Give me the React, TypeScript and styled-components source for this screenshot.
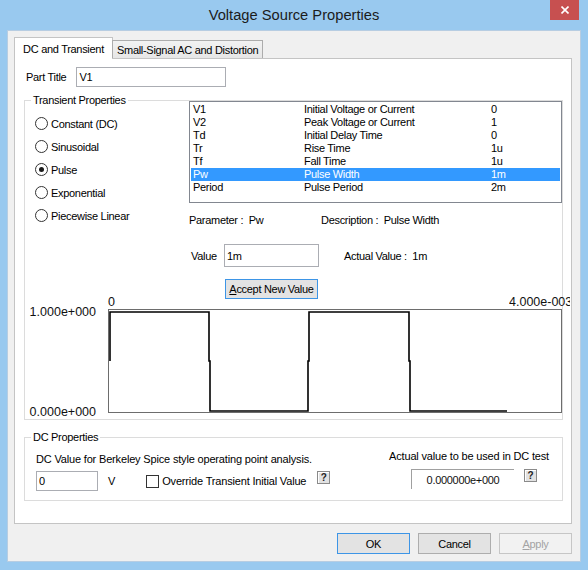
import React from 'react';
import styled, { createGlobalStyle } from 'styled-components';

const GlobalStyle = createGlobalStyle`
  html, body { margin: 0; padding: 0; background: #fff; }
  body { font-family: "Liberation Sans", Arial, sans-serif; }
  * { box-sizing: border-box; }
`;

const uiFont = `
  font-family: "Liberation Sans", Arial, sans-serif;
  font-size: 11px;
  letter-spacing: -0.3px;
  color: #000;
`;

const Frame = styled.div`
  width: 588px;
  height: 570px;
  background: #99c9ef;
  display: flex;
  flex-direction: column;
  overflow: hidden;
`;

const TitleBar = styled.div`
  height: 30px;
  display: grid;
  grid-template-columns: 38px 1fr 38px;
  align-items: start;
`;

const Title = styled.div`
  grid-column: 2;
  text-align: center;
  line-height: 30px;
  font-family: "Liberation Sans", Arial, sans-serif;
  font-size: 14.7px;
  color: #1b1b1b;
`;

const CloseBox = styled.div`
  width: 29px;
  height: 20px;
  background: #c75050;
  display: flex;
  align-items: center;
  justify-content: center;
`;

const Client = styled.div`
  margin: 0 7px 8px 7px;
  border: 1px solid #b7cde2;
  background: #f0f0f0;
  padding: 6px 8px 7px 6px;
  display: flex;
  flex-direction: column;
  ${uiFont}
`;

const TabStrip = styled.div`
  height: 21px;
  display: flex;
  align-items: flex-end;
  position: relative;
  z-index: 1;
`;

const Tab = styled.div<{ $active?: boolean }>`
  display: flex;
  align-items: center;
  ${({ $active }) =>
    $active
      ? `
    width: 99px;
    height: 22px;
    margin-bottom: -1px;
    justify-content: center;
    background: #fff;
    border: 1px solid #c4c4c4;
    border-bottom: none;
  `
      : `
    width: 151px;
    height: 18px;
    margin-left: -1px;
    padding-left: 4px;
    background: linear-gradient(#f2f2f2, #e6e6e6);
    border: 1px solid #acacac;
    border-bottom: none;
  `}
`;

const Panel = styled.div`
  width: 558px;
  height: 466px;
  background: #fff;
  border: 1px solid #c4c4c4;
  display: flex;
  flex-direction: column;
`;

const PartRow = styled.div`
  margin-top: 8px;
  padding-left: 11px;
  display: flex;
  align-items: center;
  gap: 10px;
`;

const TextBox = styled.input<{ $w: number; $h: number }>`
  ${uiFont}
  width: ${({ $w }) => $w}px;
  height: ${({ $h }) => $h}px;
  border: 1px solid #abadb3;
  background: #fff;
  padding: 0 0 0 2px;
  margin: 0;
  outline: none;
`;

const Group = styled.div<{ $top: number }>`
  position: relative;
  margin: ${({ $top }) => $top}px 0 0 9px;
  width: 539px;
  border: 1px solid #dcdcdc;
`;

const GroupTitle = styled.span`
  position: absolute;
  top: -8px;
  left: 6px;
  padding: 0 2px;
  line-height: 14px;
  background: #fff;
`;

const TransientBody = styled.div`
  display: grid;
  grid-template-columns: 164px 1fr;
`;

const RadioCol = styled.div`
  padding: 16px 0 0 10px;
  display: flex;
  flex-direction: column;
  gap: 10px;
`;

const RadioItem = styled.div`
  display: flex;
  align-items: center;
  gap: 3px;
  height: 13px;
`;

const RadioCircle = styled.span<{ $on?: boolean }>`
  width: 13px;
  height: 13px;
  border-radius: 50%;
  border: 1px solid #333;
  background: #fff;
  display: flex;
  align-items: center;
  justify-content: center;
  &::after {
    content: '';
    display: ${({ $on }) => ($on ? 'block' : 'none')};
    width: 5px;
    height: 5px;
    border-radius: 50%;
    background: #1a1a1a;
  }
`;

const RightCol = styled.div`
  display: flex;
  flex-direction: column;
  align-items: flex-start;
`;

const ListBox = styled.div`
  width: 373px;
  height: 102px;
  border: 1px solid #828790;
  background: #fff;
  padding-top: 1px;
`;

const ListRow = styled.div<{ $sel?: boolean }>`
  display: grid;
  grid-template-columns: 111px 187px 1fr;
  height: 13px;
  line-height: 13px;
  margin: 0 1px;
  padding-left: 2px;
  white-space: nowrap;
  background: ${({ $sel }) => ($sel ? '#3399ff' : 'transparent')};
  color: ${({ $sel }) => ($sel ? '#fff' : '#000')};
`;

const ParamRow = styled.div`
  margin-top: 10px;
  height: 14px;
  line-height: 14px;
  display: flex;
  white-space: pre;
`;

const ParamCell = styled.span<{ $w?: number }>`
  width: ${({ $w }) => ($w ? `${$w}px` : 'auto')};
`;

const ValueRow = styled.div`
  margin-top: 17px;
  height: 23px;
  display: flex;
  align-items: center;
  white-space: pre;
`;

const ValueLabel = styled.span`
  width: 35px;
  padding-left: 2px;
`;

const ActualValue = styled.span`
  margin-left: 25px;
`;

const PushButton = styled.div<{ $w: number; $h: number; $kind?: 'default' | 'normal' | 'disabled' }>`
  width: ${({ $w }) => $w}px;
  height: ${({ $h }) => $h}px;
  display: flex;
  align-items: center;
  justify-content: center;
  white-space: nowrap;
  border: 1px solid
    ${({ $kind }) => ($kind === 'default' ? '#3d95e6' : $kind === 'disabled' ? '#c6c6c6' : '#adadad')};
  background: ${({ $kind }) => ($kind === 'disabled' ? '#f2f2f2' : '#e3e3e3')};
  color: ${({ $kind }) => ($kind === 'disabled' ? '#a3a3a3' : '#000')};
`;

const AcceptWrap = styled.div`
  margin: 12px 0 0 36px;
`;

const Chart = styled.div`
  grid-column: 1 / -1;
  margin: -4px 0 6px 0;
  display: grid;
  grid-template-columns: 83px 1fr;
  grid-template-rows: 14px 104px;
  font-family: "Liberation Sans", Arial, sans-serif;
  font-size: 12.5px;
  letter-spacing: 0;
  color: #111;
`;

const TopLabels = styled.div`
  grid-column: 2;
  grid-row: 1;
  display: flex;
  justify-content: space-between;
  line-height: 14px;
`;

const EndLabel = styled.span`
  width: 61px;
  margin-right: -8px;
  overflow: hidden;
  white-space: nowrap;
`;

const YAxis = styled.div`
  grid-column: 1;
  grid-row: 2;
  margin: -4px 0 -6px 0;
  padding-right: 12px;
  display: flex;
  flex-direction: column;
  justify-content: space-between;
  align-items: flex-end;
  line-height: 14px;
`;

const Plot = styled.div`
  grid-column: 2;
  grid-row: 2;
  border: 1px solid #6d6d6d;
  background: #fff;
  svg { display: block; }
`;

const DcBody = styled.div`
  display: flex;
  justify-content: space-between;
  letter-spacing: -0.17px;
`;

const DcLeft = styled.div`
  padding: 14px 0 9px 11px;
  display: flex;
  flex-direction: column;
  gap: 5px;
`;

const Line = styled.div`
  line-height: 14px;
  height: 14px;
  white-space: nowrap;
`;

const DcRow = styled.div`
  display: flex;
  align-items: center;
  white-space: nowrap;
`;

const Unit = styled.span`
  margin-left: 10px;
`;

const CheckBox = styled.span`
  margin-left: 31px;
  width: 13px;
  height: 13px;
  border: 1px solid #333;
  background: #fff;
`;

const CheckLabel = styled.span`
  margin-left: 3px;
`;

const HelpButton = styled.span<{ $gap: number }>`
  margin-left: ${({ $gap }) => $gap}px;
  align-self: flex-start;
  width: 13px;
  height: 13px;
  border: 1px solid #8a8a8a;
  box-shadow: inset 1px 1px 0 #fff;
  background: #e2e2e2;
  display: flex;
  align-items: center;
  justify-content: center;
  font-size: 10px;
  font-weight: bold;
  letter-spacing: 0;
  line-height: 1;
  color: #222;
`;

const DcRight = styled.div`
  padding: 11px 13px 0 0;
  display: flex;
  flex-direction: column;
  align-items: flex-end;
`;

const DcRightRow = styled.div`
  margin-top: 6px;
  padding-right: 12px;
  display: flex;
`;

const ReadoutBox = styled.div`
  width: 103px;
  height: 20px;
  border-top: 1px solid #a0a0a0;
  border-left: 1px solid #a0a0a0;
  display: flex;
  align-items: center;
  justify-content: center;
  letter-spacing: -0.3px;
  color: #111;
`;

const ButtonRow = styled.div`
  margin-top: 9px;
  display: flex;
  justify-content: flex-end;
  gap: 8px;
`;

const params = [
  ['V1', 'Initial Voltage or Current', '0'],
  ['V2', 'Peak Voltage or Current', '1'],
  ['Td', 'Initial Delay Time', '0'],
  ['Tr', 'Rise Time', '1u'],
  ['Tf', 'Fall Time', '1u'],
  ['Pw', 'Pulse Width', '1m'],
  ['Period', 'Pulse Period', '2m'],
];

const sources = ['Constant (DC)', 'Sinusoidal', 'Pulse', 'Exponential', 'Piecewise Linear'];

function App() {
  return (
    <>
      <GlobalStyle />
      <Frame>
        <TitleBar>
          <Title>Voltage Source Properties</Title>
          <CloseBox>
            <svg width="8" height="8" viewBox="0 0 8 8">
              <path d="M0.5 0.5 L7.5 7.5 M7.5 0.5 L0.5 7.5" stroke="#fff" strokeWidth="1.6" />
            </svg>
          </CloseBox>
        </TitleBar>
        <Client>
          <TabStrip>
            <Tab $active>DC and Transient</Tab>
            <Tab>Small-Signal AC and Distortion</Tab>
          </TabStrip>
          <Panel>
            <PartRow>
              <span>Part Title</span>
              <TextBox $w={150} $h={20} defaultValue="V1" readOnly />
            </PartRow>

            <Group $top={13}>
              <GroupTitle>Transient Properties</GroupTitle>
              <TransientBody>
                <RadioCol>
                  {sources.map((s) => (
                    <RadioItem key={s}>
                      <RadioCircle $on={s === 'Pulse'} />
                      <span>{s}</span>
                    </RadioItem>
                  ))}
                </RadioCol>
                <RightCol>
                  <ListBox>
                    {params.map(([p, d, v]) => (
                      <ListRow key={p} $sel={p === 'Pw'}>
                        <span>{p}</span>
                        <span>{d}</span>
                        <span>{v}</span>
                      </ListRow>
                    ))}
                  </ListBox>
                  <ParamRow>
                    <ParamCell $w={132}>Parameter :  Pw</ParamCell>
                    <ParamCell>Description :  Pulse Width</ParamCell>
                  </ParamRow>
                  <ValueRow>
                    <ValueLabel>Value</ValueLabel>
                    <TextBox $w={95} $h={23} defaultValue="1m" readOnly />
                    <ActualValue>Actual Value :  1m</ActualValue>
                  </ValueRow>
                  <AcceptWrap>
                    <PushButton $w={93} $h={20} $kind="default">
                      <span><u>A</u>ccept New Value</span>
                    </PushButton>
                  </AcceptWrap>
                </RightCol>
                <Chart>
                  <TopLabels>
                    <span>0</span>
                    <EndLabel>4.000e-003</EndLabel>
                  </TopLabels>
                  <YAxis>
                    <span>1.000e+000</span>
                    <span>0.000e+000</span>
                  </YAxis>
                  <Plot>
                    <svg width="452" height="102" viewBox="0 0 452 102">
                      <path
                        d="M1 51 V2 H100 V51 H101 V101 H199 V51 H200 V2 H300 V51 H301 V101 H398"
                        fill="none"
                        stroke="#000"
                        strokeWidth="1.6"
                      />
                    </svg>
                  </Plot>
                </Chart>
              </TransientBody>
            </Group>

            <Group $top={17}>
              <GroupTitle>DC Properties</GroupTitle>
              <DcBody>
                <DcLeft>
                  <Line>DC Value for Berkeley Spice style operating point analysis.</Line>
                  <DcRow>
                    <TextBox $w={62} $h={20} defaultValue="0" readOnly />
                    <Unit>V</Unit>
                    <CheckBox />
                    <CheckLabel>Override Transient Initial Value</CheckLabel>
                    <HelpButton $gap={11}>?</HelpButton>
                  </DcRow>
                </DcLeft>
                <DcRight>
                  <Line>Actual value to be used in DC test</Line>
                  <DcRightRow>
                    <ReadoutBox>0.000000e+000</ReadoutBox>
                    <HelpButton $gap={10}>?</HelpButton>
                  </DcRightRow>
                </DcRight>
              </DcBody>
            </Group>
          </Panel>
          <ButtonRow>
            <PushButton $w={73} $h={21} $kind="default">OK</PushButton>
            <PushButton $w={73} $h={21}>Cancel</PushButton>
            <PushButton $w={73} $h={21} $kind="disabled">
              <span><u>A</u>pply</span>
            </PushButton>
          </ButtonRow>
        </Client>
      </Frame>
    </>
  );
}

export default App;
